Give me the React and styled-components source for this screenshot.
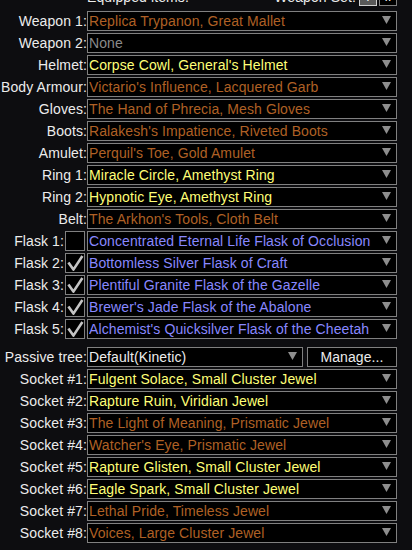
import React from "react";
import styled, { createGlobalStyle } from "styled-components";

const GlobalStyle = createGlobalStyle`
  html, body { margin: 0; padding: 0; background: #0d0d10; }
  body { font-family: "Liberation Sans", Arial, sans-serif; }
`;

const COLORS = {
  unique: "#af6025",
  rare: "#ffff77",
  magic: "#8888ff",
  none: "#8a8a8a",
  white: "#ececec",
};

const Panel = styled.div`
  width: 412px;
  height: 550px;
  overflow: hidden;
  display: flex;
  flex-direction: column;
  font-size: 14px;
  letter-spacing: 0.1px;
  color: ${COLORS.white};
`;

const Header = styled.div`
  display: flex;
  align-items: flex-end;
  box-sizing: border-box;
  width: 397px;
  height: 18px;
  margin-top: -12px;
  margin-bottom: 5px;
  padding-left: 87px;
`;

const HeaderText = styled.span`
  line-height: 18px;
  padding-top: 2px;
  white-space: nowrap;
  margin-right: ${(p) => p.$mr || 0}px;
`;

const Spacer = styled.div`
  flex: 1;
`;

const SetButton = styled.div`
  width: 18px;
  height: 18px;
  box-sizing: border-box;
  margin-left: 2px;
  border: 1px solid ${(p) => (p.$active ? "#d0d0d0" : "#808080")};
  background: ${(p) => (p.$active ? "#5a5a5a" : "#000")};
  color: #fff;
  font-size: 12px;
  line-height: 16px;
  text-align: center;
`;

const Row = styled.div`
  display: flex;
  align-items: stretch;
  height: 20px;
  margin-bottom: 2px;
  margin-top: ${(p) => p.$gap || 0}px;
`;

const LabelCell = styled.div`
  width: 87px;
  flex: none;
  display: flex;
  justify-content: flex-end;
  align-items: center;
  white-space: nowrap;
  line-height: 20px;
  color: ${COLORS.white};
`;

const CheckBox = styled.div`
  width: 20px;
  height: 20px;
  box-sizing: border-box;
  flex: none;
  margin: 0 2px 0 1px;
  border: 1px solid #808080;
  background: #000;
  display: flex;
  align-items: center;
  justify-content: center;
`;

const Dropdown = styled.div`
  width: ${(p) => p.$w || 310}px;
  flex: none;
  box-sizing: border-box;
  border: 1px solid #808080;
  background: #000;
  color: ${(p) => p.$color};
  display: flex;
  align-items: flex-start;
  padding: 0 5px 0 1px;
  line-height: 18px;
`;

const DropText = styled.span`
  flex: 1;
  white-space: nowrap;
  overflow: hidden;
`;

const Arrow = styled.svg`
  flex: none;
  margin-top: 4px;
`;

const Button = styled.div`
  width: 90px;
  margin-left: 4px;
  box-sizing: border-box;
  border: 1px solid #808080;
  background: #000;
  color: ${COLORS.white};
  line-height: 18px;
  text-align: center;
`;

const DropArrow = () => (
  <Arrow width="9" height="8" viewBox="0 0 9 8">
    <polygon points="0,0 9,0 4.5,8" fill="#8e8e8e" />
  </Arrow>
);

const Check = () => (
  <svg width="18" height="18" viewBox="0 0 18 18">
    <path
      d="M2.4 8.6 L7.4 15.6 L16.4 2"
      fill="none"
      stroke="#c4c4c4"
      strokeWidth="2.6"
      strokeLinejoin="round"
    />
  </svg>
);

const Select = ({ text, color, w }) => (
  <Dropdown $color={color} $w={w}>
    <DropText>{text}</DropText>
    <DropArrow />
  </Dropdown>
);

const items = [
  ["Weapon 1:", "Replica Trypanon, Great Mallet", "unique"],
  ["Weapon 2:", "None", "none"],
  ["Helmet:", "Corpse Cowl, General's Helmet", "rare"],
  ["Body Armour:", "Victario's Influence, Lacquered Garb", "unique"],
  ["Gloves:", "The Hand of Phrecia, Mesh Gloves", "unique"],
  ["Boots:", "Ralakesh's Impatience, Riveted Boots", "unique"],
  ["Amulet:", "Perquil's Toe, Gold Amulet", "unique"],
  ["Ring 1:", "Miracle Circle, Amethyst Ring", "rare"],
  ["Ring 2:", "Hypnotic Eye, Amethyst Ring", "rare"],
  ["Belt:", "The Arkhon's Tools, Cloth Belt", "unique"],
];

const flasks = [
  ["Flask 1:", "Concentrated Eternal Life Flask of Occlusion", false],
  ["Flask 2:", "Bottomless Silver Flask of Craft", true],
  ["Flask 3:", "Plentiful Granite Flask of the Gazelle", true],
  ["Flask 4:", "Brewer's Jade Flask of the Abalone", true],
  ["Flask 5:", "Alchemist's Quicksilver Flask of the Cheetah", true],
];

const sockets = [
  ["Socket #1:", "Fulgent Solace, Small Cluster Jewel", "rare"],
  ["Socket #2:", "Rapture Ruin, Viridian Jewel", "rare"],
  ["Socket #3:", "The Light of Meaning, Prismatic Jewel", "unique"],
  ["Socket #4:", "Watcher's Eye, Prismatic Jewel", "unique"],
  ["Socket #5:", "Rapture Glisten, Small Cluster Jewel", "rare"],
  ["Socket #6:", "Eagle Spark, Small Cluster Jewel", "rare"],
  ["Socket #7:", "Lethal Pride, Timeless Jewel", "unique"],
  ["Socket #8:", "Voices, Large Cluster Jewel", "unique"],
];

export default function App() {
  return (
    <>
      <GlobalStyle />
      <Panel>
        <Header>
          <HeaderText>Equipped items:</HeaderText>
          <Spacer />
          <HeaderText $mr={1}>Weapon Set:</HeaderText>
          <SetButton $active>I</SetButton>
          <SetButton>II</SetButton>
        </Header>

        {items.map(([label, text, kind]) => (
          <Row key={label}>
            <LabelCell>{label}</LabelCell>
            <Select text={text} color={COLORS[kind]} />
          </Row>
        ))}

        {flasks.map(([label, text, on]) => (
          <Row key={label}>
            <LabelCell>
              {label}
              <CheckBox>{on && <Check />}</CheckBox>
            </LabelCell>
            <Select text={text} color={COLORS.magic} />
          </Row>
        ))}

        <Row $gap={6}>
          <LabelCell>Passive tree:</LabelCell>
          <Select text="Default(Kinetic)" color={COLORS.white} w={216} />
          <Button>Manage...</Button>
        </Row>

        {sockets.map(([label, text, kind]) => (
          <Row key={label}>
            <LabelCell>{label}</LabelCell>
            <Select text={text} color={COLORS[kind]} />
          </Row>
        ))}
      </Panel>
    </>
  );
}
